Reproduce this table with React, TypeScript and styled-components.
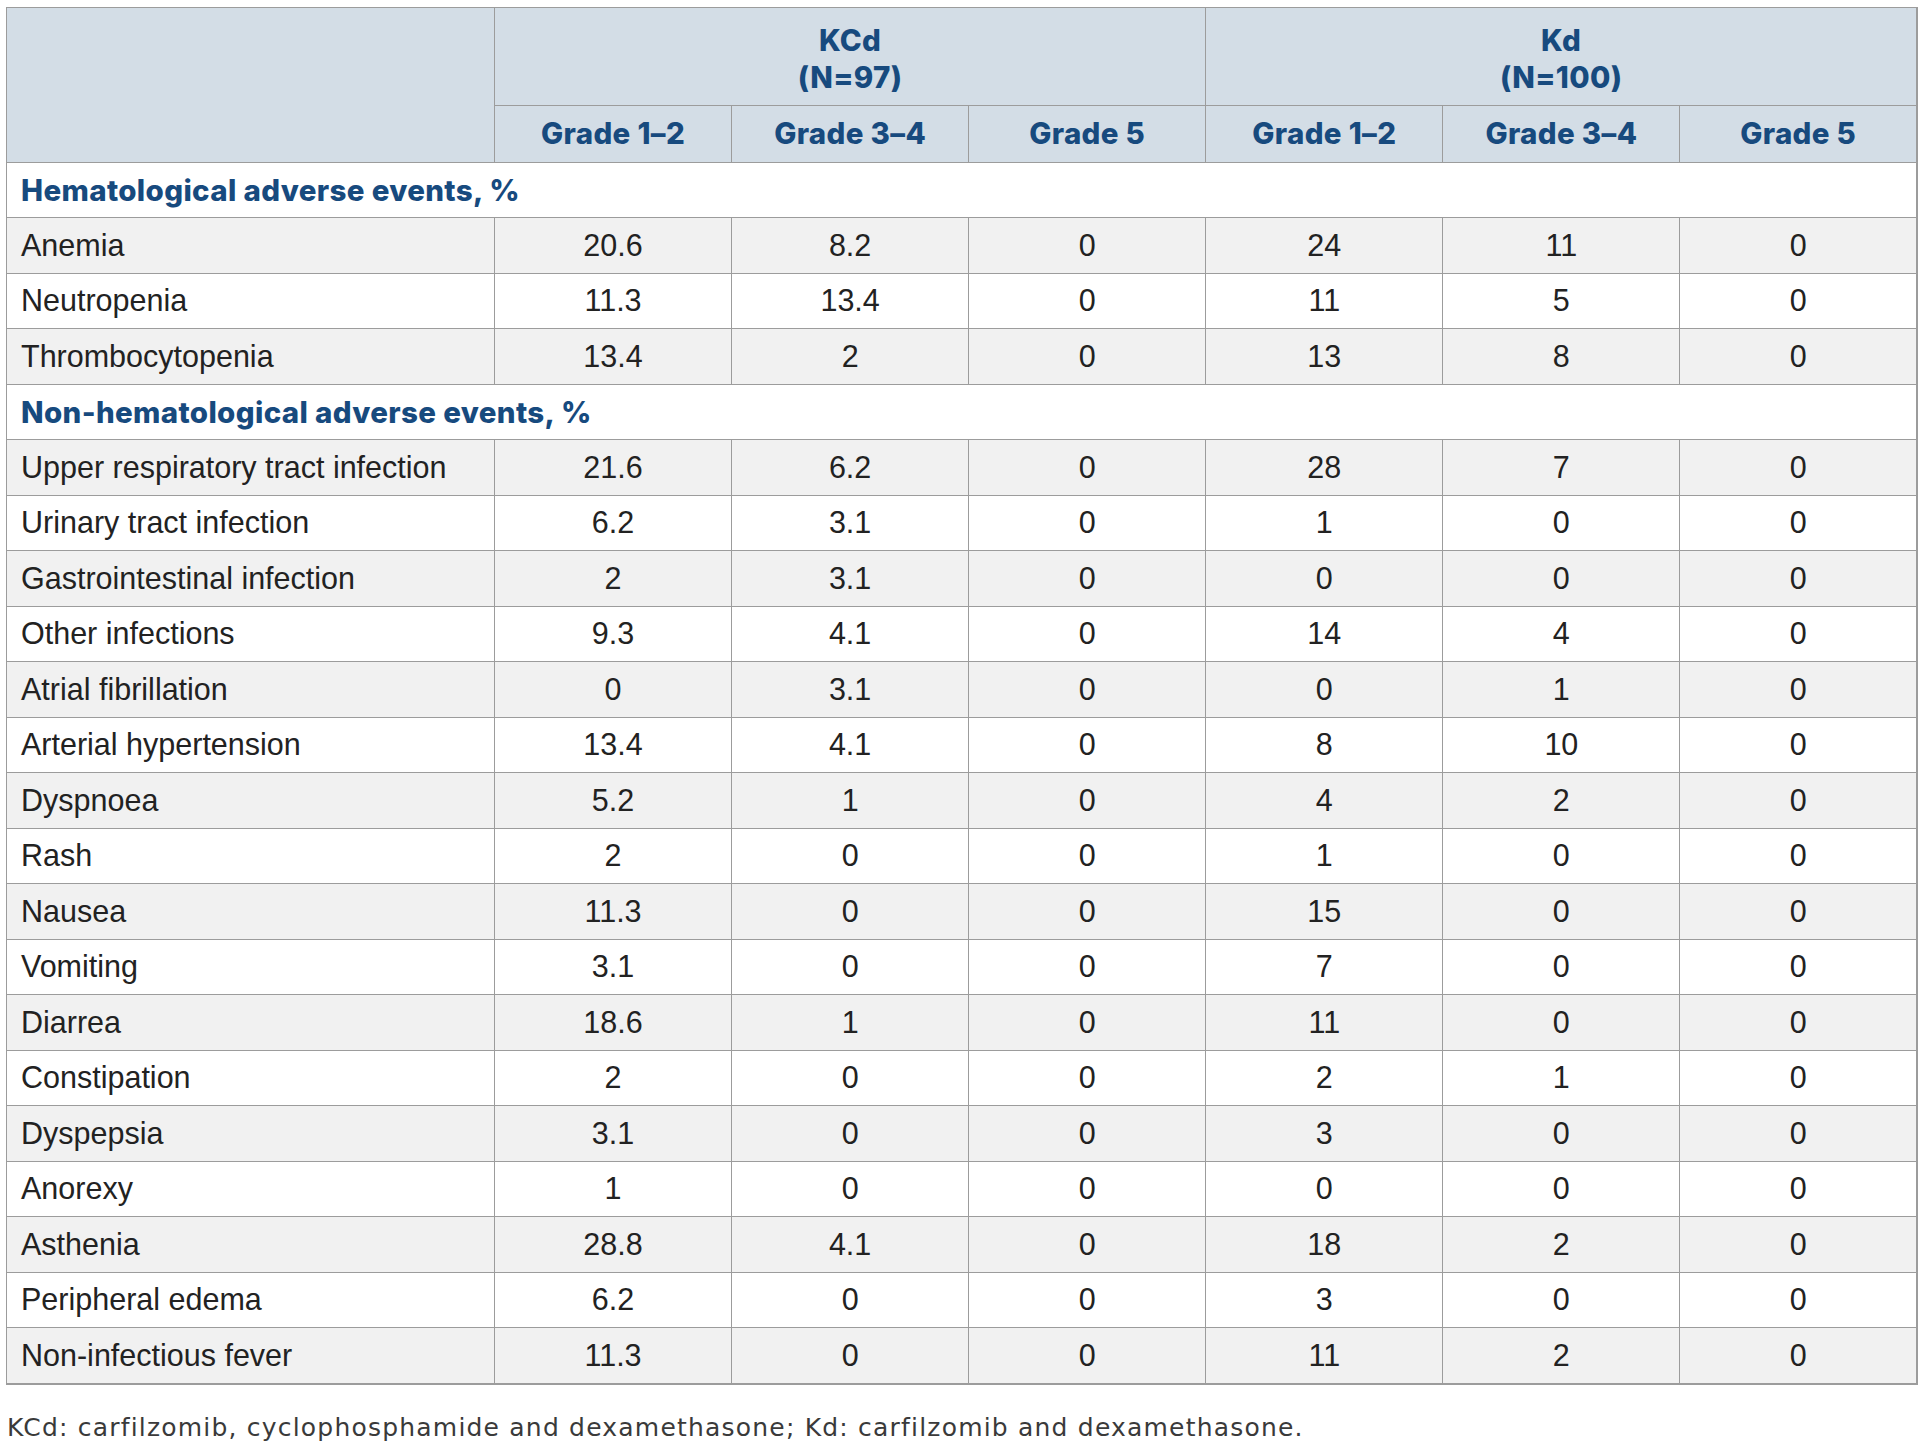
import React from 'react';
import styled, { createGlobalStyle } from 'styled-components';

const GlobalStyle = createGlobalStyle`
  body {
    margin: 0;
    background: #ffffff;
  }
`;

const Page = styled.div`
  padding: 7px 13px 0 6px;
`;

const Table = styled.table`
  width: 1912px;
  border-collapse: collapse;
  table-layout: fixed;
  border-right: 2px solid #9c9c9c;
  border-bottom: 2px solid #9c9c9c;
  font-family: 'Liberation Sans', Arial, sans-serif;
  font-size: 30.5px;
  color: #222222;
`;

const HeadCell = styled.th<{ $tall?: boolean }>`
  background: #d3dde6;
  border: 1px solid #9c9c9c;
  color: #174a7e;
  font-family: Inter, 'Noto Sans', sans-serif;
  font-weight: 800;
  font-size: 29.5px;
  letter-spacing: 0.35px;
  line-height: 37px;
  text-align: center;
  height: ${(p) => (p.$tall ? '93px' : '55.5px')};
  padding: ${(p) => (p.$tall ? '4px 0 0' : '0')};
`;

const SectionCell = styled.td`
  background: #ffffff;
  border: 1px solid #9c9c9c;
  color: #174a7e;
  font-family: Inter, 'Noto Sans', sans-serif;
  font-weight: 800;
  font-size: 29.5px;
  letter-spacing: 0.35px;
  height: 54.5px;
  padding: 0 0 0 14px;
`;

const Row = styled.tr<{ $striped: boolean }>`
  background: ${(p) => (p.$striped ? '#f1f1f1' : '#ffffff')};
`;

const LabelCell = styled.td`
  border: 1px solid #9c9c9c;
  height: 54.5px;
  padding: 0 0 0 14px;
  white-space: nowrap;
`;

const ValueCell = styled.td`
  border: 1px solid #9c9c9c;
  text-align: center;
  padding: 0;
`;

const Footnote = styled.p`
  margin: 28px 0 0 1px;
  font-family: 'DejaVu Sans', Verdana, sans-serif;
  font-weight: 400;
  font-size: 25px;
  letter-spacing: 1.2px;
  color: #3a3a3a;
`;

type DataRow = [string, string, string, string, string, string, string];

const hematological: DataRow[] = [
  ['Anemia', '20.6', '8.2', '0', '24', '11', '0'],
  ['Neutropenia', '11.3', '13.4', '0', '11', '5', '0'],
  ['Thrombocytopenia', '13.4', '2', '0', '13', '8', '0'],
];

const nonHematological: DataRow[] = [
  ['Upper respiratory tract infection', '21.6', '6.2', '0', '28', '7', '0'],
  ['Urinary tract infection', '6.2', '3.1', '0', '1', '0', '0'],
  ['Gastrointestinal infection', '2', '3.1', '0', '0', '0', '0'],
  ['Other infections', '9.3', '4.1', '0', '14', '4', '0'],
  ['Atrial fibrillation', '0', '3.1', '0', '0', '1', '0'],
  ['Arterial hypertension', '13.4', '4.1', '0', '8', '10', '0'],
  ['Dyspnoea', '5.2', '1', '0', '4', '2', '0'],
  ['Rash', '2', '0', '0', '1', '0', '0'],
  ['Nausea', '11.3', '0', '0', '15', '0', '0'],
  ['Vomiting', '3.1', '0', '0', '7', '0', '0'],
  ['Diarrea', '18.6', '1', '0', '11', '0', '0'],
  ['Constipation', '2', '0', '0', '2', '1', '0'],
  ['Dyspepsia', '3.1', '0', '0', '3', '0', '0'],
  ['Anorexy', '1', '0', '0', '0', '0', '0'],
  ['Asthenia', '28.8', '4.1', '0', '18', '2', '0'],
  ['Peripheral edema', '6.2', '0', '0', '3', '0', '0'],
  ['Non-infectious fever', '11.3', '0', '0', '11', '2', '0'],
];

const grades = ['Grade 1–2', 'Grade 3–4', 'Grade 5'];

const renderRows = (rows: DataRow[]) =>
  rows.map((row, i) => (
    <Row key={row[0]} $striped={i % 2 === 0}>
      <LabelCell>{row[0]}</LabelCell>
      {row.slice(1).map((value, j) => (
        <ValueCell key={j}>{value}</ValueCell>
      ))}
    </Row>
  ));

const App: React.FC = () => (
  <Page>
    <GlobalStyle />
    <Table>
      <colgroup>
        <col style={{ width: 488 }} />
        <col />
        <col />
        <col />
        <col />
        <col />
        <col />
      </colgroup>
      <thead>
        <tr>
          <HeadCell rowSpan={2} />
          <HeadCell colSpan={3} $tall>
            KCd
            <br />
            (N=97)
          </HeadCell>
          <HeadCell colSpan={3} $tall>
            Kd
            <br />
            (N=100)
          </HeadCell>
        </tr>
        <tr>
          {[...grades, ...grades].map((g, i) => (
            <HeadCell key={i}>{g}</HeadCell>
          ))}
        </tr>
      </thead>
      <tbody>
        <tr>
          <SectionCell colSpan={7}>Hematological adverse events, %</SectionCell>
        </tr>
        {renderRows(hematological)}
        <tr>
          <SectionCell colSpan={7}>Non-hematological adverse events, %</SectionCell>
        </tr>
        {renderRows(nonHematological)}
      </tbody>
    </Table>
    <Footnote>
      KCd: carfilzomib, cyclophosphamide and dexamethasone; Kd: carfilzomib and
      dexamethasone.
    </Footnote>
  </Page>
);

export default App;
